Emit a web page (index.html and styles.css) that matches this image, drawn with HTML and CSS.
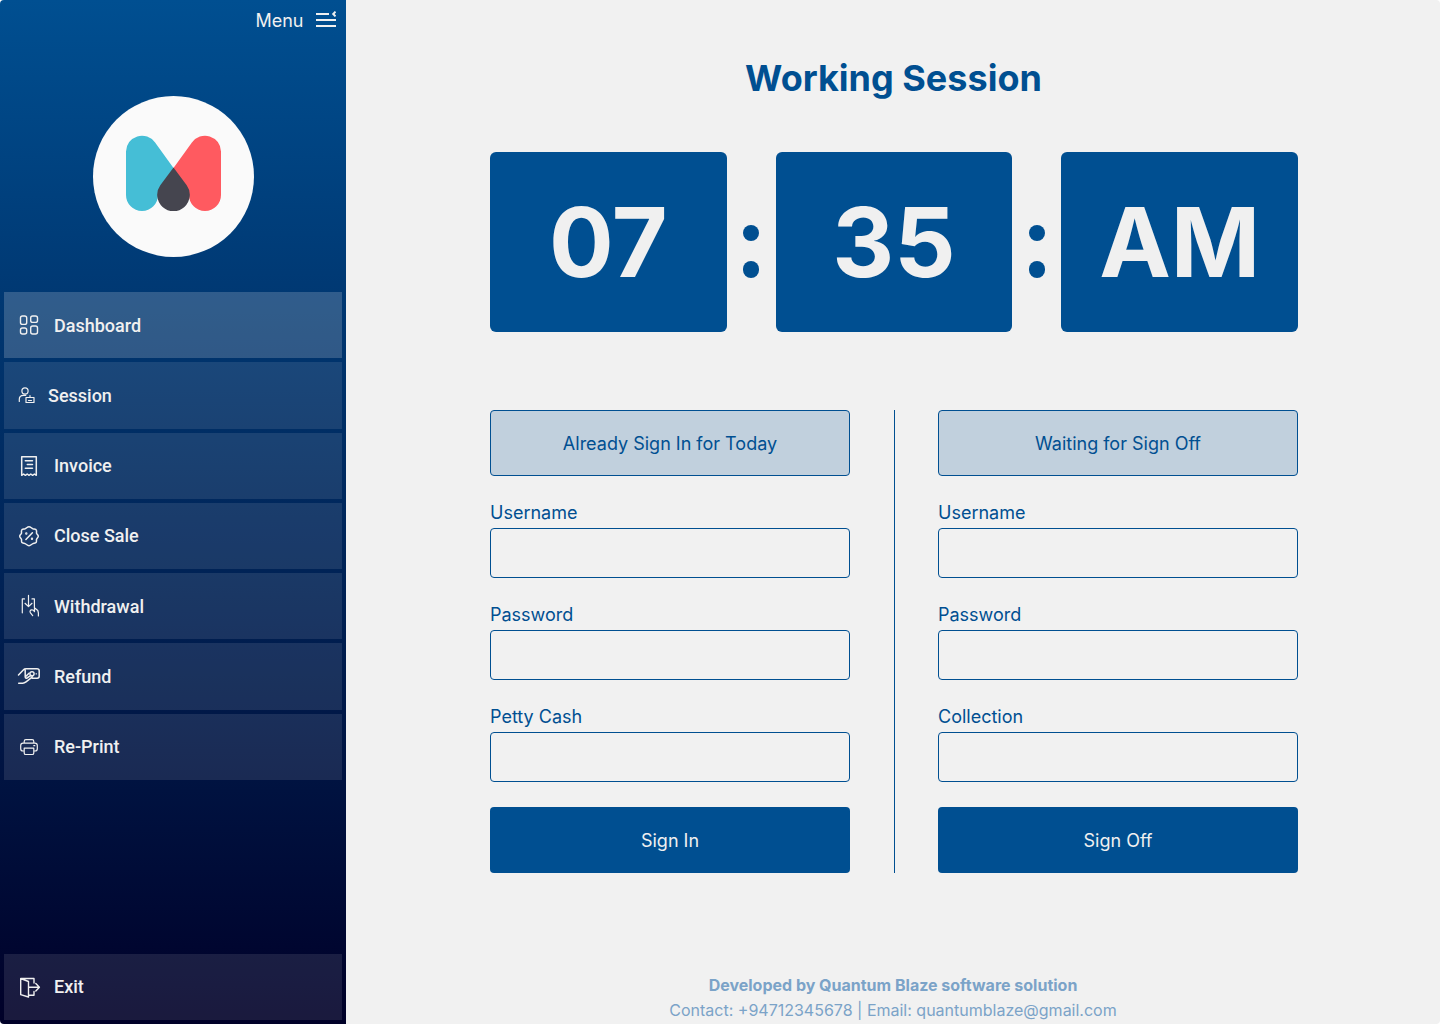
FILE: index.html
```html
<!DOCTYPE html>
<html lang="en">
<head>
<meta charset="utf-8">
<title>Working Session</title>
<link rel="stylesheet" href="styles.css">
</head>
<body>
<div class="app">
  <aside class="sidebar">
    <div class="menu-toggle">
      <span>Menu</span>
      <svg class="menu-icon" width="20" height="18" viewBox="0 0 20 18" fill="none" stroke="#f0f0f0" stroke-width="2"><path d="M0 4h13M0 10h20M0 16h20"/><path d="M19.500 1.600L17.200 4l2.300 2.400"/></svg>
    </div>
    <div class="logo">
      <svg width="96" height="77" viewBox="0 0 96 77">
        <path fill="#45bed6" d="M1 16.500A16 16 0 0 1 30.100 7.500L48.500 33 33 60a16 16 0 0 1-32 0z"/>
        <path fill="#ff5a60" d="M96 16.500A16 16 0 0 0 66.900 7.500L48.500 33 64 60a16 16 0 0 0 32 0z"/>
        <path fill="#45454f" d="M48.500 32.500L61.700 50.200A16.300 16.300 0 1 1 35.300 50.200z"/>
      </svg>
    </div>
    <nav class="nav">
      <a class="item active"><svg class="icon" viewBox="0 0 24 24"><rect x="3.500" y="3" width="6.200" height="8.400" rx="2"/><rect x="13.700" y="3" width="6.800" height="6.400" rx="2"/><rect x="3.500" y="15" width="6.200" height="6" rx="2"/><rect x="13.700" y="13" width="6.800" height="8" rx="2"/></svg><span>Dashboard</span></a>
      <a class="item session"><svg class="icon" viewBox="0 0 24 24"><g stroke-width="1.200"><circle cx="10" cy="8" r="3.100"/><path d="M4.300 18.500v-2.200c0-2.500 1.800-4 4.200-4h2.300M11 14.500h8v5h-8zM15 12.500v2M13.500 17.500h3"/></g></svg><span>Session</span></a>
      <a class="item"><svg class="icon" viewBox="0 0 24 24"><path d="M4.700 21.300V2.700h14.600v18.600l-1.900-1.300-1.800 1.300-1.800-1.300-1.800 1.300-1.800-1.300-1.800 1.300-1.800-1.300zM8.300 6.700h7.200M10.300 10.500h5.200M8.300 14.300h7.200" stroke-width="1.500"/></svg><span>Invoice</span></a>
      <a class="item"><svg class="icon" viewBox="0 0 24 24"><path stroke-width="1.500" d="M12 2.700c1.700 0 2.400 1.600 3.900 2.100 1.400.4 3 .1 3.500 1.400.5 1.100-.2 2.300.2 3.300.4 1 1.700 1.400 1.700 2.700s-1.300 1.800-1.700 2.900c-.4 1 .2 2.300-.4 3.300-.6 1-2.100.8-3.300 1.200-1.300.5-2.200 2.100-3.900 2.100s-2.600-1.600-3.900-2.100c-1.200-.4-2.700-.2-3.300-1.200-.6-1 0-2.300-.4-3.300-.4-1.100-1.700-1.600-1.700-2.900s1.300-1.700 1.700-2.700c.4-1-.3-2.200.2-3.300.5-1.300 2.100-1 3.500-1.400 1.500-.5 2.200-2.100 3.900-2.100zM8.900 15.500l6.500-6.800"/><circle cx="9.300" cy="9.500" r=".5"/><circle cx="15" cy="14.700" r=".5"/></svg><span>Close Sale</span></a>
      <a class="item"><svg class="icon" viewBox="0 0 24 24"><path stroke-width="1.200" d="M7.500 4.900H5.300V18.800M11.500 1.300v11M8 9.300l3.500 3.300L15 9.300M15 4.900h2.400v8.800l3.400 2.800.6 2.500v3M17.500 13.300v4.300c-.7-1.200-1.700-2-3-1.700-1.700.4-1.800 1.800-1 3l2.200 2.700"/></svg><span>Withdrawal</span></a>
      <a class="item"><svg class="icon" viewBox="0 0 24 24"><path stroke-width="1.500" d="M1.500 11l5-5.200c.7-.8 1.500-1 2.600-1H20c1.500 0 2.200.7 2.200 2v5.500c0 1.300-.7 1.900-2 1.900h-5M8.200 5v8.200M1.700 19.200h4.100c1.400 0 2.200-.5 3.200-1.300l5.800-4.500c1-1 0-2.200-1.200-1.700L9.900 14c-1.300.5-2.200-.5-1.200-1.500l3.300-3.300"/><circle cx="15" cy="9.800" r="2.100"/><path stroke-width="1.200" d="M19 9.800h.5"/></svg><span>Refund</span></a>
      <a class="item"><svg class="icon" viewBox="0 0 24 24"><path stroke-width="1.200" d="M7.200 8V6.400c0-1.100.6-1.700 1.700-1.700h6.200c1.100 0 1.700.6 1.700 1.700V8M7.200 16H6c-1.500 0-2.300-.8-2.300-2.300v-3.200C3.700 9 4.500 8.200 6 8.200h12c1.500 0 2.300.8 2.300 2.300v3.200c0 1.500-.8 2.300-2.300 2.300h-1.200M7.200 13.200h9.600v4.700c0 1-.5 1.600-1.600 1.600H8.800c-1.100 0-1.600-.6-1.600-1.600zM16.800 10.700h1"/></svg><span>Re-Print</span></a>
    </nav>
    <a class="item exit"><svg class="icon" viewBox="0 0 24 24"><path stroke-width="1.400" d="M3.700 3.500H17V8M17 16.500v3.800h-5M3.700 3.500v16.200l7.800 2.300V6.500L3.700 3.500M12 12.300h10.300M18.800 8.600l3.600 3.700-3.600 3.700"/></svg><span>Exit</span></a>
  </aside>
  <main class="main">
    <h1>Working Session</h1>
    <div class="clock">
      <div class="tile">07</div><div class="colon"><i></i><i></i></div>
      <div class="tile">35</div><div class="colon"><i></i><i></i></div>
      <div class="tile">AM</div>
    </div>
    <div class="forms">
      <form class="form">
        <div class="status">Already Sign In for Today</div>
        <label class="field">Username<input type="text"></label>
        <label class="field">Password<input type="password"></label>
        <label class="field">Petty Cash<input type="text"></label>
        <button type="button">Sign In</button>
      </form>
      <div class="divider"></div>
      <form class="form">
        <div class="status">Waiting for Sign Off</div>
        <label class="field">Username<input type="text"></label>
        <label class="field">Password<input type="password"></label>
        <label class="field">Collection<input type="text"></label>
        <button type="button">Sign Off</button>
      </form>
    </div>
    <footer class="footer">
      <strong>Developed by Quantum Blaze software solution</strong>
      <span>Contact: +94712345678 | Email: quantumblaze@gmail.com</span>
    </footer>
  </main>
</div>
</body>
</html>
```
FILE: styles.css
```css
* { box-sizing: border-box; }
body {
  margin: 0;
  background: #fff;
  font-family: Inter, sans-serif;
}
.app {
  display: flex;
  width: 1440px;
  height: 1024px;
  border-radius: 4px;
  overflow: hidden;
  background: #f1f1f1;
}
.sidebar {
  display: flex;
  flex-direction: column;
  width: 346px;
  padding: 0 4px 4px;
  background: linear-gradient(#004f91, #000028);
}
.menu-toggle {
  display: flex;
  justify-content: flex-end;
  align-items: center;
  gap: 12.5px;
  height: 40px;
  padding-right: 6px;
  color: #f0f0f0;
  font-size: 18px;
}
.menu-icon { margin-bottom: 2px; }
.logo {
  display: flex;
  align-items: center;
  justify-content: center;
  align-self: center;
  width: 161px;
  height: 161px;
  margin: 56px 0 35px;
  padding-bottom: 7px;
  border-radius: 50%;
  background: #fafafa;
}
.nav { display: flex; flex-direction: column; gap: 4px; }
.item {
  display: flex;
  align-items: center;
  gap: 13px;
  height: 66.28px;
  padding-left: 13px;
  background: rgba(240, 240, 240, .11);
  color: #f0f0f0;
  font: 500 18px Roboto, sans-serif;
}
.item.active { background: rgba(240, 240, 240, .2); }
.item.session { gap: 9px; padding-left: 11px; }
.item.exit { margin-top: auto; }
.icon {
  width: 24px;
  height: 24px;
  fill: none;
  stroke: #f0f0f0;
  stroke-width: 1.4;
  stroke-linecap: round;
  stroke-linejoin: round;
}
.main {
  display: flex;
  flex-direction: column;
  align-items: center;
  flex: 1;
  color: #004f91;
}
h1 { margin: 55px 0 0 1px; font-size: 36px; line-height: 46px; font-weight: 700; }
.clock { display: flex; width: 808px; height: 180px; margin: 51px 0 78px; }
.clock, .forms { margin-left: 2px; }
.tile {
  display: flex;
  align-items: center;
  justify-content: center;
  flex: 1;
  border-radius: 6px;
  background: #004f91;
  color: #f0f0f0;
  font-size: 96px;
  font-weight: 700;
}
.colon {
  display: flex;
  flex-direction: column;
  align-items: center;
  gap: 20px;
  width: 49px;
  padding-top: 72.5px;
}
.colon i { width: 16.5px; height: 16.5px; border-radius: 50%; background: #004f91; }
.forms { display: flex; justify-content: space-between; width: 808px; height: 463px; font-size: 18px; }
.form { display: flex; flex-direction: column; width: 360px; }
.status {
  display: flex;
  align-items: center;
  justify-content: center;
  flex-shrink: 0;
  height: 66px;
  margin-bottom: 26px;
  padding-top: 2px;
  line-height: 22px;
  border: 1px solid #004f91;
  border-radius: 4px;
  background: #c1d0dd;
}
.field { display: flex; flex-direction: column; flex-shrink: 0; height: 102px; line-height: 22px; }
.field:nth-of-type(3) { height: 76px; }
.field input {
  height: 50px;
  margin-top: 4px;
  padding: 0 12px;
  border: 1px solid #004f91;
  border-radius: 4px;
  background: transparent;
}
.form button {
  height: 66px;
  margin-top: auto;
  border: 0;
  border-radius: 4px;
  background: #004f91;
  color: #f0f0f0;
  font: 18px Inter, sans-serif;
}
.divider { width: 1px; background: #004f91; }
.footer {
  display: flex;
  flex-direction: column;
  align-items: center;
  margin-top: 100px;
  color: #7ba3c8;
  font-size: 16px;
  line-height: 25px;
}
.footer strong { font-weight: 700; }
```
